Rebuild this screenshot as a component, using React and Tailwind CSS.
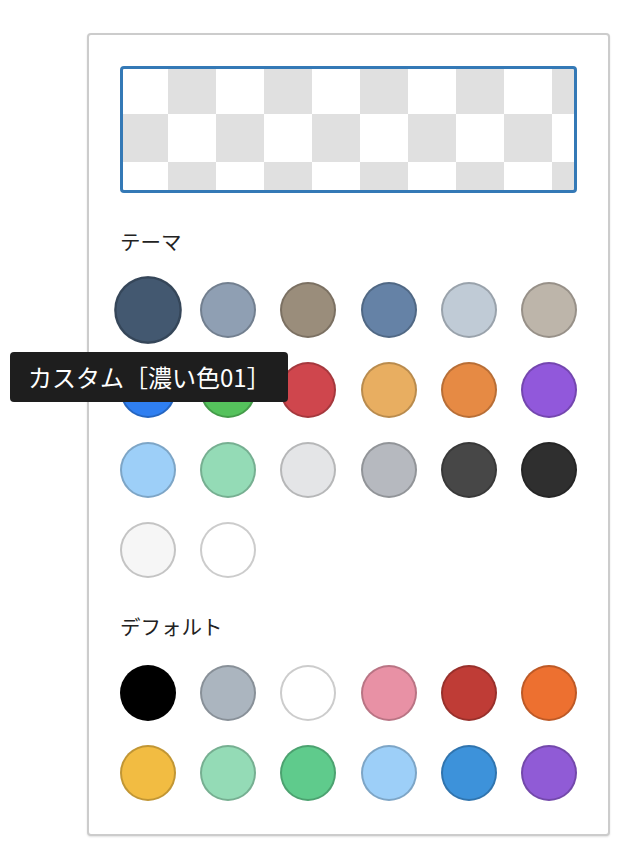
import React from "react";

const theme = [
  "#435870", "#8f9fb3", "#9a8d7b", "#6582a6", "#c0cbd6", "#bdb5aa",
  "#2f7ff1", "#55c25c", "#cf464d", "#e8ae61", "#e68a44", "#9158db",
  "#9dcff8", "#94dbb6", "#e4e5e7", "#b6b9bf", "#474747", "#2f2f2f",
  "#f6f6f6", "#ffffff",
];

const defaults = [
  "#000000", "#abb5bf", "#ffffff", "#e891a5", "#bf3c36", "#ed7030",
  "#f2bc42", "#94dbb6", "#5fcb8c", "#9dcff8", "#3d92da", "#905bd6",
];

function Swatch({ color, active }) {
  return (
    <button
      type="button"
      className={
        "w-14 h-14 rounded-full border-2 border-black/20 " +
        (active ? "scale-[1.21]" : "")
      }
      style={{ backgroundColor: color }}
    />
  );
}

export default function App() {
  return (
    <div
      className="relative w-[636px] h-[868px] bg-white"
      style={{ fontFamily: '"Noto Sans CJK JP", "Noto Sans", sans-serif' }}
    >
      <div className="absolute left-[87px] top-[33px] w-[523px] h-[803px] rounded border-2 border-[#cccccc] bg-white p-[31px] shadow-[0_1px_2px_rgba(0,0,0,0.12)]">
        <div className="h-[127px] rounded border-[3px] border-[#3479b6] bg-origin-border bg-[length:96px_96px] bg-[conic-gradient(#e0e0e0_25%,#ffffff_0_50%,#e0e0e0_0_75%,#ffffff_0)]" />
        <div className="mt-[34px] text-[20.5px] leading-[28px] text-[#222222]">テーマ</div>
        <div className="mt-[27px] grid grid-cols-6 gap-x-6 gap-y-6">
          {theme.map((c, i) => (
            <Swatch key={i} color={c} active={i === 0} />
          ))}
        </div>
        <div className="mt-[34px] text-[20.5px] leading-[28px] text-[#222222]">デフォルト</div>
        <div className="mt-[25px] grid grid-cols-6 gap-x-6 gap-y-6">
          {defaults.map((c, i) => (
            <Swatch key={i} color={c} />
          ))}
        </div>
      </div>
      <div className="absolute left-[10px] top-[352px] h-[50px] w-[278px] rounded bg-[#1e1e1e] pl-[18px] flex items-center text-[24px] text-white whitespace-nowrap">
        カスタム［濃い色01］
      </div>
    </div>
  );
}
